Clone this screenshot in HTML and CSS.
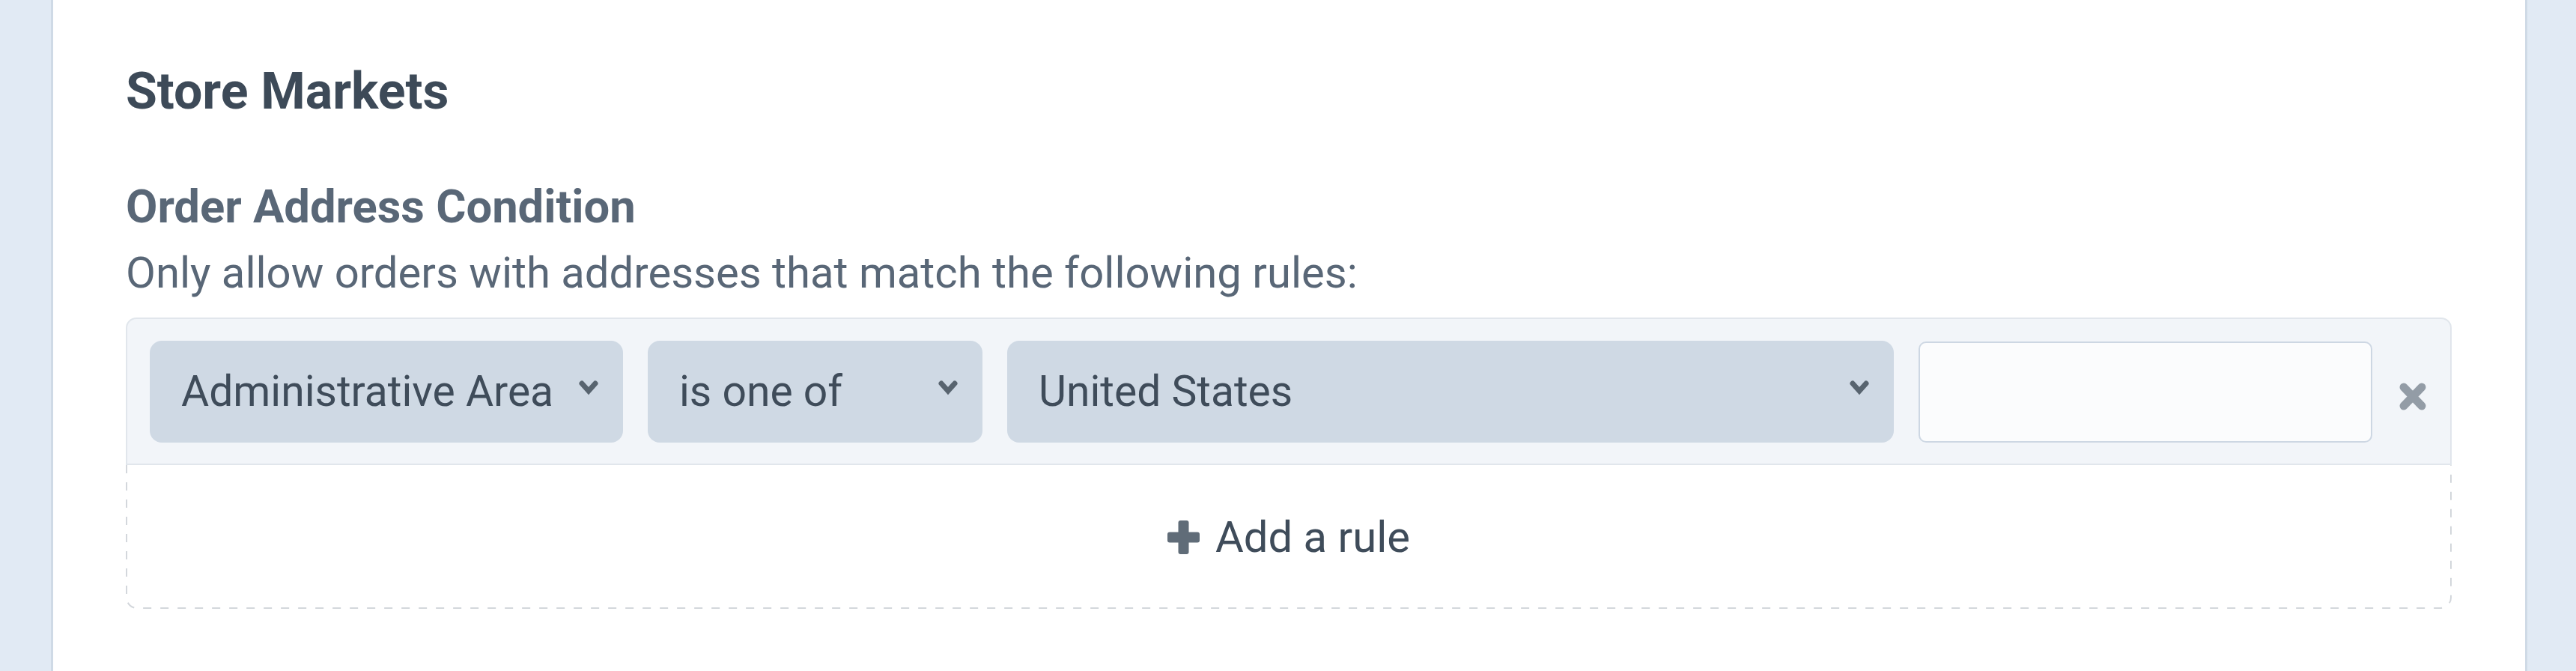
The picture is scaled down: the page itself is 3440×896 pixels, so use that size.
FILE: index.html
```html
<!DOCTYPE html>
<html lang="en">
<head>
<meta charset="utf-8">
<title>Store Markets</title>
<link rel="stylesheet" href="styles.css">
</head>
<body>
<div class="page">
  <section class="card">
    <h2 class="title">Store Markets</h2>
    <div class="field">
      <div class="label">Order Address Condition</div>
      <div class="instructions">Only allow orders with addresses that match the following rules:</div>
      <div class="condition">
        <div class="rules">
          <div class="select select-attr">
            <span>Administrative Area</span>
            <svg class="chevron" width="26" height="20" viewBox="0 0 26 20"><polyline points="4,4 13,14 22,4" fill="none" stroke="currentColor" stroke-width="7" stroke-linecap="round" stroke-linejoin="miter"/></svg>
          </div>
          <div class="select select-op">
            <span>is one of</span>
            <svg class="chevron" width="26" height="20" viewBox="0 0 26 20"><polyline points="4,4 13,14 22,4" fill="none" stroke="currentColor" stroke-width="7" stroke-linecap="round" stroke-linejoin="miter"/></svg>
          </div>
          <div class="select select-value">
            <span>United States</span>
            <svg class="chevron" width="26" height="20" viewBox="0 0 26 20"><polyline points="4,4 13,14 22,4" fill="none" stroke="currentColor" stroke-width="7" stroke-linecap="round" stroke-linejoin="miter"/></svg>
          </div>
          <div class="text-input"></div>
          <button class="remove" type="button" aria-label="Remove">
            <svg width="38" height="37" viewBox="0 0 38 37"><path d="M7 6 L31 31 M31 6 L7 31" stroke="currentColor" stroke-width="11" stroke-linecap="round"/></svg>
          </button>
        </div>
        <div class="footer">
          <svg class="dash-outline" width="3106" height="192" viewBox="0 0 3106 192"><path d="M1 0 V177 A14 14 0 0 0 15 191 H3091 A14 14 0 0 0 3105 177 V0" fill="none" stroke="#d3d7dc" stroke-width="2" stroke-dasharray="11 12"/></svg>
          <button class="add-rule" type="button">
            <svg width="43" height="45" viewBox="0 0 43 45"><rect x="14.5" y="0" width="14" height="45" rx="3"/><rect x="0" y="15.5" width="43" height="14" rx="3"/></svg>
            <span>Add a rule</span>
          </button>
        </div>
      </div>
    </div>
  </section>
</div>
</body>
</html>
```
FILE: styles.css
```css
html, body {
  margin: 0;
  padding: 0;
}
body {
  background: #e1eaf4;
  font-family: Roboto, "Liberation Sans", sans-serif;
  color: #3f4c5a;
  height: 896px;
  overflow: hidden;
}
.page {
  padding: 0 65px 0 68px;
}
.card {
  background: #ffffff;
  border-left: 3px solid #cfdae6;
  border-right: 3px solid #cfdae6;
  min-height: 896px;
  box-sizing: border-box;
  padding: 82px 98px 0 97px;
}
.title {
  margin: 0;
  font-size: 68px;
  line-height: 80px;
  font-weight: 700;
  color: #3d4a58;
}
.field {
  padding-top: 74px;
}
.label {
  font-size: 61.5px;
  line-height: 80px;
  font-weight: 700;
  color: #596777;
}
.instructions {
  margin-top: 8px;
  font-size: 58px;
  line-height: 80px;
  color: #596777;
}
.condition {
  margin-top: 20px;
}
.rules {
  display: flex;
  align-items: center;
  gap: 33px;
  background: #f2f5f9;
  border: 2px solid #e1e6ec;
  border-radius: 14px 14px 0 0;
  padding: 29px 31px 28px 30px;
}
.select {
  flex: none;
  box-sizing: border-box;
  height: 136px;
  display: flex;
  align-items: center;
  justify-content: space-between;
  background: #cfd9e4;
  border-radius: 16px;
  padding: 0 33px 0 42px;
  font-size: 57px;
  line-height: 64px;
  color: #3f4c5a;
  white-space: nowrap;
}
.select-attr { width: 632px; }
.select-op { width: 447px; }
.select-value { flex: 1; }
.chevron {
  flex: none;
  color: #58646f;
  margin-bottom: 10px;
}
.text-input {
  flex: none;
  width: 606px;
  height: 135px;
  box-sizing: border-box;
  background: #fbfcfd;
  border: 2px solid #cdd7e3;
  border-radius: 10px;
}
.remove {
  flex: none;
  width: 38px;
  height: 37px;
  padding: 0;
  margin-left: 2px;
  border: 0;
  background: none;
  color: #939ca6;
  display: flex;
  margin-top: 12px;
}
.footer {
  position: relative;
  height: 192px;
  display: flex;
  align-items: center;
  justify-content: center;
}
.dash-outline {
  position: absolute;
  top: 0;
  left: 0;
  pointer-events: none;
}
.add-rule {
  display: flex;
  align-items: center;
  gap: 21px;
  border: 0;
  background: none;
  padding: 0;
  font-family: inherit;
  font-size: 58px;
  line-height: 64px;
  color: #3f4c5a;
}
.add-rule svg {
  fill: #606c78;
}
```
